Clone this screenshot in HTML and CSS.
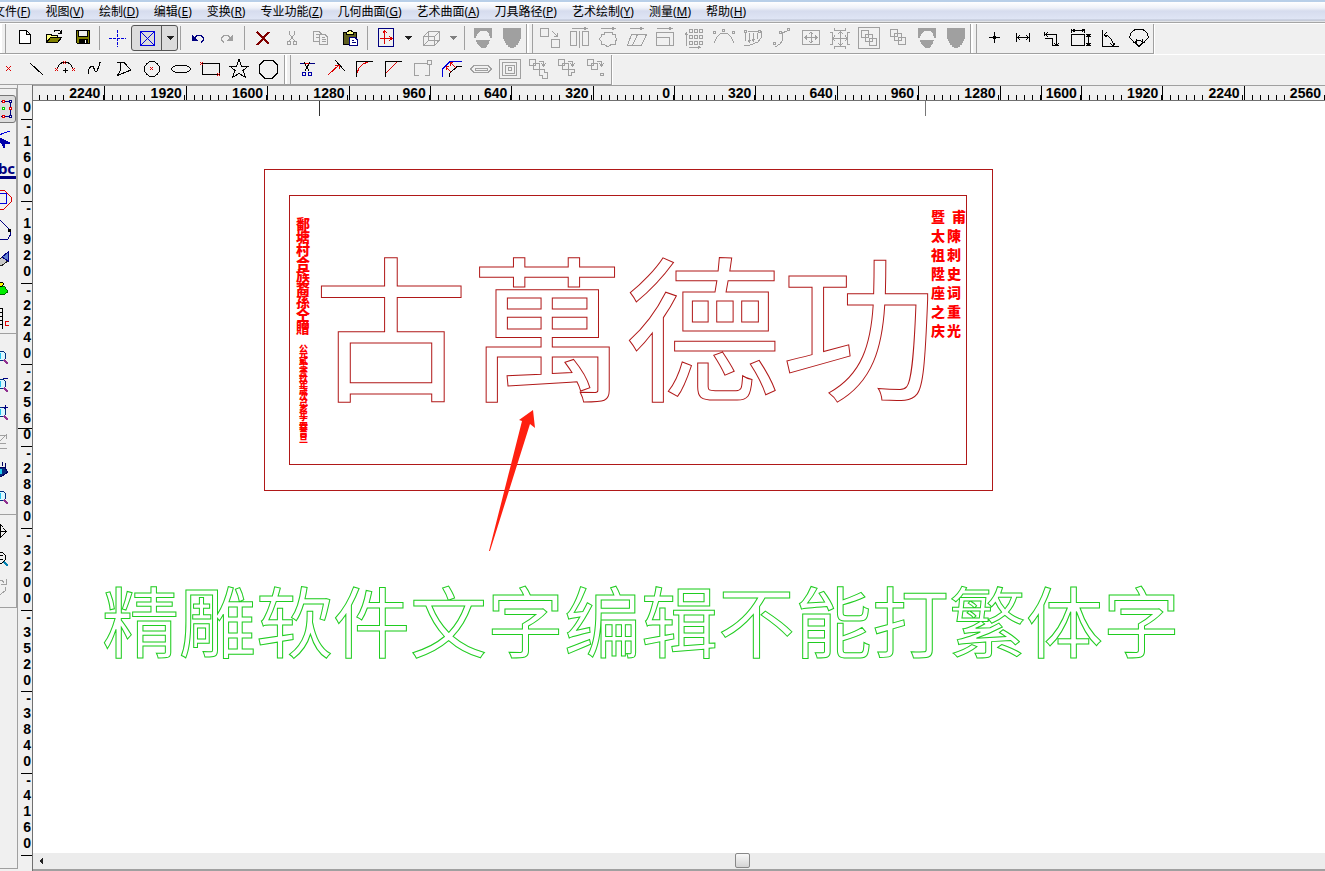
FILE: index.html
```html
<!DOCTYPE html>
<html lang="zh-CN">
<head>
<meta charset="utf-8">
<title>精雕</title>
<link rel="stylesheet" href="styles.css">
</head>
<body>
<div class="app">
<nav class="menubar">
<button>文件(<u>F</u>)</button><button>视图(<u>V</u>)</button><button>绘制(<u>D</u>)</button><button>编辑(<u>E</u>)</button><button>变换(<u>R</u>)</button><button>专业功能(<u>Z</u>)</button><button>几何曲面(<u>G</u>)</button><button>艺术曲面(<u>A</u>)</button><button>刀具路径(<u>P</u>)</button><button>艺术绘制(<u>Y</u>)</button><button>测量(<u>M</u>)</button><button>帮助(<u>H</u>)</button>
</nav>

<svg class="defs" aria-hidden="true">
<defs>
<g id="shield"><path fill="#a0a0a0" d="M-9-10H9V1H8V3H7V5H6V7H4V9H2V10H-2V9H-4V7H-6V5H-7V3H-8V1H-9Z"/></g>
<g id="shield-cut"><path fill="#a0a0a0" d="M-9-10H9V0H7L6-4L3-7H-3L-6-4L-7 0H-9ZM-7 2H7L6 5L4 8L2 10H-2L-4 8L-6 5Z"/></g>
<g id="squares"><path d="M-9.5-8.5h7v7h-7zM-5.5-4.5h7v7h-7zM-1.5-.5h7v7h-7z"/></g>
<g id="ungroup"><path d="M-9.5-9.5h6v6h-6zM-5.5-5.5h6v6h-6zM0-7.5H4.5V-3M2.5-5.5l2 3l2-3"/></g>
<g id="lens"><circle cx="1" cy="-2" r="5" fill="#d8f8ff" stroke="#003080"/><path d="M0-5v6" stroke="#20c0f0" stroke-width="2"/><path d="M4 2l4 4" stroke="#903090" stroke-width="2"/></g>
</defs>
</svg>

<div class="toolbar">
<div class="group first">
<button aria-label="新建"><svg viewBox="-12 -12 24 24"><path fill="#fff" d="M-5.5-7.5H1.5L5.5-3.5V5.5H-5.5ZM1.5-7.5V-3.5H5.5"/></svg></button>
<button aria-label="打开"><svg viewBox="-12 -12 24 24"><path fill="#ffff80" d="M-7.5 4.5V-3.5H-3L-2-2.5H3.5V0.500"/><path fill="#808000" d="M-7.500 4.500L-3.500-.5H7.500L3.500 4.500Z"/><path d="M0-6.500L2-8H5L7-5.500M7.500-8V-4.500H4"/></svg></button>
<button aria-label="保存"><svg viewBox="-12 -12 24 24"><path fill="#808000" d="M-6.5-7.5H6.5V5.5H-5.5L-6.5 4.500Z"/><path fill="#f0f0f0" d="M-4.500-7.500H4.500V-1.500H-4.500Z"/><path fill="#000" d="M-4 1H4.500V5H-4Z"/><path stroke="#fff" d="M2.500 2V5"/></svg></button>
<i class="sep tight"></i>
<button aria-label="定位"><svg viewBox="-12 -12 24 24" stroke="#00d"><path stroke-dasharray="3 1" d="M-8 .5H9"/><path stroke-dasharray="3 1" d="M.5-8V9"/></svg></button>
<span class="combo"><button aria-label="选择框"><svg viewBox="-12 -12 24 24" stroke="#00d"><path d="M-6.500-6.500H7.500V7.500H-6.500ZL7.500 7.500M7.500-6.500L-6.500 7.500"/></svg></button><button class="drop" aria-label="更多选择"><svg viewBox="-8 -12 16 24"><path fill="#222" stroke="none" d="M-4-2H4L0 2Z"/></svg></button></span>
<i class="sep tight"></i>
<button aria-label="撤销"><svg viewBox="-12 -12 24 24" stroke="#000080"><path d="M-4 .5L-1-2.500H3L5.500 0V2L3 4.500"/><path fill="#000080" d="M-5.500-2.500V2.500H-.5Z"/></svg></button>
<button aria-label="重做"><svg viewBox="-12 -12 24 24" stroke="#a0a0a0"><path d="M4 .5L1-2.500H-3L-5.500 0V2L-3 4.500"/><path fill="#a0a0a0" d="M5.500-2.500V2.500H.5Z"/></svg></button>
<i class="sep"></i>
<button aria-label="删除"><svg viewBox="-12 -12 24 24" stroke="#800000" stroke-width="2"><path d="M-6-6L6 6M6-6L-6 7"/></svg></button>
<button aria-label="剪切"><svg viewBox="-12 -12 24 24" stroke="#a0a0a0"><path d="M-2.500-7V-4L2.500 3M2.500-7V-4L-2.500 3"/><circle cx="-3" cy="5" r="2"/><circle cx="3" cy="5" r="2"/></svg></button>
<button aria-label="复制"><svg viewBox="-12 -12 24 24" stroke="#a0a0a0"><path fill="#f0f0f0" d="M-7.500-6.500H-2L.5-4V3.500H-7.500ZM-5-3.500H-2M-5-.5H-2"/><path fill="#f0f0f0" d="M-1.500-3.500H4L6.500-1V6.500H-1.500ZM1-.5H4M1 1.500H5M1 3.500H5"/></svg></button>
<button aria-label="粘贴"><svg viewBox="-12 -12 24 24"><path fill="#606020" d="M-6.500-5.500H6.500V6.500H-6.500Z"/><path fill="#ff8" d="M-3.500-3.500V-5.500L-1-7.500H1L3.500-5.500V-3.500Z"/><path fill="#fff" stroke="#000080" d="M-.5-.5H5L7.500 2V7.500H-.5ZM2 2.500H4M2 4.500H6"/></svg></button>
<i class="sep"></i>
<button aria-label="坐标系"><svg viewBox="-12 -12 24 24" stroke="#000080"><path d="M-7.500-9.500H7.500V8.500H-7.500Z"/><path stroke="#d00" d="M-1.500 6V-7M-6 .5H5M-3.500-4.500L-1.500-7.500L1.500-4.500M3-2L6 .5L3 3"/></svg></button>
<button class="drop" aria-label="坐标系选项"><svg viewBox="-8 -12 16 24"><path fill="#222" stroke="none" d="M-4-2H4L0 2Z"/></svg></button>
<button aria-label="视图"><svg viewBox="-12 -12 24 24" stroke="#a0a0a0"><path d="M-7.500-1.500H3.500V7.500H-7.500ZL-2.500-6.500H8.500L3.500-1.500M8.500-6.500V2L3.500 7.500M-2.500-6.500V2.500H8.500M-2.500 2.500L-7.500 7.500"/></svg></button>
<button class="drop" aria-label="视图选项"><svg viewBox="-8 -12 16 24"><path fill="#808080" stroke="none" d="M-4-2H4L0 2Z"/></svg></button>
<i class="sep"></i>
<button aria-label="曲面裁剪"><svg viewBox="-12 -12 24 24" stroke="none"><use href="#shield-cut"/></svg></button>
<button aria-label="曲面"><svg viewBox="-12 -12 24 24" stroke="none"><use href="#shield"/></svg></button>
</div>
<div class="group gray">
<button aria-label="平移"><svg viewBox="-12 -12 24 24"><path d="M-9.500-9.500h8v8h-8zM1.500 1.500h8v8h-8zM2-7L7-2M7.500-5V-1.500H4"/></svg></button>
<button aria-label="镜像"><svg viewBox="-12 -12 24 24"><path d="M-8.500-6.500h6v14h-6zM3.500-6.500h6v14h-6zM.5-7V10M-7-9.500H8M5-11l3 1.500L5-8"/></svg></button>
<button aria-label="旋转"><svg viewBox="-12 -12 24 24"><path d="M-4-6H4L4-4L7-4V-1L9 1L7 4V6H4L0 9L-4 6H-7V3L-9 1L-7-1V-4H-4ZM-7-9.500H7M4-11l3 1.500L4-8"/></svg></button>
<button aria-label="倾斜"><svg viewBox="-12 -12 24 24"><path d="M-9.500 7.500L-5.500-3.500H9.500L4.500 7.500ZM-4.500 7.500L.5-3.500M-7-9.500H6M3-11l3 1.500L3-8"/></svg></button>
<button aria-label="缩放"><svg viewBox="-12 -12 24 24"><path d="M-9.500-5.500H7.500V7.500H-9.500ZM-9.500-.5H3.500V7.500M-9-9.500H6M3-11l3 1.500L3-8"/></svg></button>
<button aria-label="阵列"><svg viewBox="-12 -12 24 24"><path d="M-5.500-8.500h3v3h-3zM-.5-8.500h3v3h-3zM4.500-8.500h3v3h-3zM-5.500-2.500h3v3h-3zM-.5-2.500h3v3h-3zM4.500-2.500h3v3h-3zM-5.500 3.500h3v3h-3zM-.5 3.500h3v3h-3zM4.500 3.500h3v3h-3zM-8.500 8V-5M-10-3l1.500-2l1.500 2M-6 9.500H5M3 8l2 1.500L3 11"/></svg></button>
<button aria-label="弯曲"><svg viewBox="-12 -12 24 24"><path d="M-10 5L-7-1L-4-4L0-5L4-4L7-1L10 5M-10.500-6.500h2v2h-2zM-1.500-8.500h2v2h-2zM8.500-6.500h2v2h-2z"/></svg></button>
<button aria-label="投影"><svg viewBox="-12 -12 24 24"><path d="M-8.500-7.500h2v2h-2zM5.500-7.500h2v2h-2zM-5-6.500H5M-7.500-5V3M-3.500-5V4M.5-5V3M4.500-5V1M-5 2l1.500 2L-2 2M-1 1l1.500 2L2 1M-9 8L-3 7L5 4L8 0V-7"/></svg></button>
<button aria-label="沿曲线"><svg viewBox="-12 -12 24 24"><path d="M5-7L0-5V3L-2 6L-7 9M5.500-9.500h2v2h-2zM-2.500-6.500h2v2h-2zM-8.500 4.500h2v2h-2z"/></svg></button>
<button aria-label="居中"><svg viewBox="-12 -12 24 24"><path d="M-8.500-7.500H8.500V6.500H-8.500ZM-6-.5H6M.5-6V5M-4-2.500L-6-.5L-4 1.500M4-2.500L6-.5L4 1.500M-2-4L0-6L2-4M-2 3L0 5L2 3"/></svg></button>
<button aria-label="对齐"><svg viewBox="-12 -12 24 24"><path d="M-7 .5H7M.5-7V8M-5-2.500L-7 .5L-5 3M5-2.500L7 .5L5 3M-2-4L.5-6.500L3-4M-2 5L.5 7.500L3 5M-5.500-10V-7.500H5.500V-10M-5.500 11V8.500H5.500V11M-10-5.500H-7.500V6.500H-10M10-5.500H7.500V6.500H10"/></svg></button>
<button aria-label="组合"><svg viewBox="-12 -12 24 24"><path d="M-10.500-10.500H10.500V10.500H-10.500Z"/><use href="#squares" x="2" y="1"/></svg></button>
<button aria-label="解组"><svg viewBox="-12 -12 24 24"><use href="#squares" x="2"/></svg></button>
<button aria-label="裁剪面"><svg viewBox="-12 -12 24 24" stroke="none"><use href="#shield-cut"/></svg></button>
<button aria-label="整面"><svg viewBox="-12 -12 24 24" stroke="none"><use href="#shield"/></svg></button>
</div>
<div class="group">
<button aria-label="测点"><svg viewBox="-12 -12 24 24"><path d="M-5-.5H6M.5-6V5"/><path fill="#000" stroke="none" d="M-1-2h3v3h-3z"/></svg></button>
<button aria-label="测距"><svg viewBox="-12 -12 24 24"><path d="M-6.500-5V4M6.500-5V4M-6-.5H6M-3-3L-5.500-.5L-3 2M3-3L5.500-.5L3 2"/></svg></button>
<button aria-label="测折线"><svg viewBox="-12 -12 24 24"><path d="M-7.500-6V-2M-7-3.500H4.500V7M-4-6L-6-3.500L-4-1M-7.500.5H.500V7.500H7M2 5L4.500 7.500L7 5"/></svg></button>
<button aria-label="测尺寸"><svg viewBox="-12 -12 24 24"><path d="M-9.500-3.500H3.500V7.500H-9.500ZM-9.500-9V-5M3.500-9V-5M-9-7.500H3M-6-9L-8-7.500L-6-6M1-9L3-7.500L1-6M5-3.500H10M5 7.500H10M7.500-3V7M5.500-1L7.500-3L9.500-1M5.500 5L7.500 7L9.500 5"/></svg></button>
<button aria-label="测角"><svg viewBox="-12 -12 24 24"><path d="M-7.500-8V8.500H9M-6-3H-3L1 1L3 5V8M-3-6L-6-3L-3-1M0 5L3 8L5 5"/></svg></button>
<button aria-label="测弧"><svg viewBox="-12 -12 24 24"><path d="M0 8.500L-9.500-.5L-8-5L-4-8.500H4L8-5L9.500-.5ZM-4 4L0 2L4 4M-3 1V4H-6M3 1V4H6"/></svg></button>
</div>
</div>

<div class="toolbar">
<div class="group second">
<button aria-label="点"><svg viewBox="-12 -12 24 24" stroke="#d00"><path d="M-1-3L4 2M4-3L-1 2"/></svg></button>
<button aria-label="直线"><svg viewBox="-12 -12 24 24"><path d="M-6-6L7 6"/></svg></button>
<button aria-label="圆弧"><svg viewBox="-12 -12 24 24"><path d="M-8 0L-6-4L-3-6.500H3L6-4L8 0M-2 1.500H3M.5-1V4"/><path stroke="#d00" d="M-10-1l3 3m0-3l-3 3M7-1l3 3m0-3l-3 3M-2-8l3 3m0-3l-3 3"/></svg></button>
<button aria-label="样条"><svg viewBox="-12 -12 24 24"><path d="M-6 5L-5 0L-3-3H-1L1 2H3L5-3V-6L7-7"/></svg></button>
<button aria-label="多段线"><svg viewBox="-12 -12 24 24"><path d="M-6-6.500H1L8 1L-5.500 6.500L-3 2V-6"/></svg></button>
<button aria-label="圆"><svg viewBox="-12 -12 24 24"><circle cx="0" cy="0" r="7.500"/><path stroke="#d00" d="M-2-2l3 3m0-3l-3 3"/></svg></button>
<button aria-label="椭圆"><svg viewBox="-12 -12 24 24"><ellipse cx="0" cy="0" rx="9.500" ry="4"/></svg></button>
<button aria-label="矩形"><svg viewBox="-12 -12 24 24"><path d="M-7.500-5.500H9.500V5.500H-7.500Z"/><path stroke="#d00" d="M-10-7l3 3m0-3l-3 3M7 4l3 3m0-3l-3 3"/></svg></button>
<button aria-label="星形"><svg viewBox="-12 -12 24 24"><path d="M0-9.500L2.500-3H9.500L4 1.500L6.500 8.500L0 4.500L-6.500 8.500L-4 1.500L-9.500-3H-2.500Z"/></svg></button>
<button aria-label="多边形"><svg viewBox="-12 -12 24 24"><path d="M-3.500-9H4.500L9.500-4V4L4.500 9H-3.500L-8.500 4V-4Z"/></svg></button>
</div>
<div class="group third">
<button aria-label="修剪"><svg viewBox="-12 -12 24 24"><path stroke="#000080" d="M-7-5.500H8"/><path stroke="#d00" d="M-3-5.500H3"/><path d="M-3-7L2 2M3-7L-2 2"/><g stroke="#00a"><circle cx="-3" cy="5" r="2"/><circle cx="3" cy="5" r="2"/></g></svg></button>
<button aria-label="延伸"><svg viewBox="-12 -12 24 24"><path d="M-1-9L9 2"/><path stroke="#d00" d="M-8 6L3-4M-1-4H3V0"/></svg></button>
<button aria-label="圆角"><svg viewBox="-12 -12 24 24"><path d="M-8.500 8V-7.500H8"/><path stroke="#d00" d="M-8 4L-6-1L-2-5L3-7"/></svg></button>
<button aria-label="倒角"><svg viewBox="-12 -12 24 24"><path d="M-8.500 8V-7.500H8"/><path stroke="#d00" d="M-8 4L3-7"/></svg></button>
<button aria-label="拐角"><svg viewBox="-12 -12 24 24" stroke="#a0a0a0"><path d="M5-5.500H-8.500V6.500H-4M2 6.500H6.500V-4M4.500-8.500h4v4h-4z"/></svg></button>
<button aria-label="偏移"><svg viewBox="-12 -12 24 24"><path stroke="#00d" d="M-9.500 8V0L-2-7.500H10"/><path d="M-3 8V5L5-2.500H10"/><path stroke="#d00" d="M-6-2L-1 3M-1-6L4-1M-6 1V-2.500H-3M-2-3V-6.500H1"/></svg></button>
<button aria-label="槽"><svg viewBox="-12 -12 24 24" stroke="#a0a0a0"><path d="M-10.500 0L-7-3.500H7L10.500 0L7 3.500H-7ZM-6-.5H6V1H-6Z"/></svg></button>
<button aria-label="环"><svg viewBox="-12 -12 24 24" stroke="#a0a0a0"><path d="M-10.500-9.500H10.500V9.500H-10.500ZM-7.500-6.500H6.500V6.500H-7.500ZM-4.500-3.500H4.500V4.500H-4.500ZM-1.500-1.500h3v3h-3z"/></svg></button>
<button aria-label="并集"><svg viewBox="-12 -12 24 24" stroke="#a0a0a0"><use href="#ungroup"/><path d="M.5.5H5.500V3.500H8.500V9.500H3.500V6.500H.5Z"/></svg></button>
<button aria-label="差集"><svg viewBox="-12 -12 24 24" stroke="#a0a0a0"><use href="#ungroup"/><path d="M.5.5H6.500V3.500H3.500V6.500H.5Z"/></svg></button>
<button aria-label="交集"><svg viewBox="-12 -12 24 24" stroke="#a0a0a0"><use href="#ungroup"/><path d="M3.500 4.500h3v2h-3z"/></svg></button>
</div>
</div>

<div class="work">
<aside class="side">
<div class="palette">
<button class="on" aria-label="选择"><svg viewBox="-12 -12 24 24"><path stroke="#000080" d="M0-7.500H9.500V7.500H0"/><path stroke="#d00" fill="#fff" d="M1.500-8.500h2v2h-2zM1.500 6.500h2v2h-2zM8.500-1.500h2v2h-2z"/><path stroke="#0c0" fill="#fff" d="M1.500-1.500h2v2h-2z"/><path stroke="#000080" fill="#fff" d="M8.500-8.500h2v2h-2zM8.500 6.500h2v2h-2z"/></svg></button>
<button aria-label="节点"><svg viewBox="-12 -12 24 24"><path stroke="#00d" d="M-4-3L10-8"/><path fill="#00a" stroke="#00a" d="M-2-2L10 4L5 4L4 9Z"/></svg></button>
<button aria-label="文字"><b class="abc">abc</b></button>
<button aria-label="图形"><svg viewBox="-12 -12 24 24"><path stroke="#d00" d="M-4-9H4L11-2V3L4 10H-4"/><path stroke="#00d" d="M-8-5.500H6.500V4.500H-8"/></svg></button>
<button aria-label="曲线"><svg viewBox="-12 -12 24 24"><path stroke="#000080" d="M0-9L10 1L11 5L8 10L2 11L-3 9"/><path fill="#000" d="M8 0h2v2h-2z"/></svg></button>
<button aria-label="刷子"><svg viewBox="-12 -12 24 24"><path stroke="#222" fill="#c8c8c8" d="M-4 5L2-2L8 2L1 7Z"/><path fill="#6080d0" stroke="#000080" d="M2-2L8-7V2Z"/></svg></button>
<button aria-label="填充"><svg viewBox="-12 -12 24 24"><path fill="#0e0" stroke="#060" d="M-4 5V-3L5-2L8 3L3 6Z"/><path fill="#ff0" d="M-4-7H2L4-5L2-3H-4Z"/></svg></button>
<button aria-label="标尺"><svg viewBox="-12 -12 24 24"><path d="M-2-10.500H2.500V10M-2-6.500H2M-2-2.500H2M-2 1.500H2M-2 5.500H2"/><path stroke="#d00" d="M9 2.500H6L5.500 3V6L6 6.500H9"/></svg></button>
</div>
<div class="palette zoom">
<button aria-label="窗口缩放"><svg viewBox="-12 -12 24 24"><use href="#lens"/></svg></button>
<button aria-label="缩小"><svg viewBox="-12 -12 24 24"><use href="#lens"/><path stroke="#000080" d="M3-7.500H8"/></svg></button>
<button aria-label="放大"><svg viewBox="-12 -12 24 24"><use href="#lens"/><path stroke="#000080" d="M2-6.500H8M5.500-9V-4"/></svg></button>
<button aria-label="上一视图"><svg viewBox="-12 -12 24 24" stroke="#a0a0a0"><path d="M-3-7H6L-2 1H6M-3 6.500H7M2-3L6-7V-3"/></svg></button>
<button aria-label="观察"><svg viewBox="-12 -12 24 24"><path fill="#0a2a80" stroke="#000060" d="M-8 0L-2-3H4L8 2L2 6H-4ZM-2-4V-8M2-4V-8M5-2V-7"/><path stroke="#20d0f0" stroke-width="2" d="M1-1V4"/></svg></button>
<button aria-label="全部"><svg viewBox="-12 -12 24 24"><use href="#lens"/></svg></button>
<i class="rule"></i>
<button aria-label="移动视图"><svg viewBox="-12 -12 24 24"><path d="M-6 .5H6M.5-6V7M3-3L6.500.5L3 4M-2-4L.5-6.500L3-4M-2 4L.5 6.500L3 4"/></svg></button>
<button aria-label="实际大小"><svg viewBox="-12 -12 24 24"><path d="M-2-7H2L5-4V1L2 4H-2M-1-3.500H3M-1 .5H3"/><path stroke="#0080b0" stroke-width="2" d="M4 3L8 7"/></svg></button>
<button aria-label="旋转视图"><svg viewBox="-12 -12 24 24" stroke="#a0a0a0"><path d="M-2-7H2L4-4M6-8V-3H1M6 0L5 4L1 7H-3"/></svg></button>
</div>
</aside>
<div class="vruler"><span class="zero">0</span><div class="vsegs"><span><i>-</i>1600</span><span><i>-</i>1920</span><span><i>-</i>2240</span><span><i>-</i>2560</span><span><i>-</i>2880</span><span><i>-</i>3200</span><span><i>-</i>3520</span><span><i>-</i>3840</span><span><i>-</i>4160</span></div><i class="vmark"></i></div>
<div class="stage">
<div class="hruler"><div class="hsegs"><span><b>2240</b></span><span><b>1920</b></span><span><b>1600</b></span><span><b>1280</b></span><span><b>960</b></span><span><b>640</b></span><span><b>320</b></span><span><b>0</b></span><span><b>320</b></span><span><b>640</b></span><span><b>960</b></span><span><b>1280</b></span><span><b>1600</b></span><span><b>1920</b></span><span><b>2240</b></span><span><b>2560</b></span></div><i class="hmark"></i></div>
<main class="canvas">
<svg class="drawing">
<path stroke="#333" d="M286.500 0V15"/><path stroke="#777" d="M892.500 0V15"/>
<rect class="frame" x="231.500" y="68.500" width="728" height="321"/>
<rect class="frame" x="256.500" y="94.500" width="677" height="269"/>
<text class="plaque" x="280" y="288">古萬德功</text>
<text class="note" x="69" y="551">精雕软件文字编辑不能打繁体字</text>
<path class="pointer" d="M500 309L502 327L497 323L457 450L456 450L489 320L486 319Z"/>
</svg>
<div class="column donors">鄱塘村合族裔孫仝贈</div>
<div class="column date">公元贰零壹玖年歲次己亥年孟春吉旦</div>
<div class="column right-a">暨太祖陞座之庆</div>
<div class="column right-b"><span>甫</span>陳刺史词重光</div>
</main>
<div class="scroll"><button aria-label="向左滚动"><svg viewBox="0 0 16 14"><path fill="#222" stroke="none" d="M6 7L10 3V11Z"/></svg></button><input type="range" aria-label="水平滚动" min="0" max="1000" value="544"></div>
</div>
</div>
</div>
</body>
</html>
```
FILE: styles.css
```css
* { box-sizing: border-box; }
body { margin: 0; background: #f0f0f0; font-family: "Noto Sans", "Noto Sans CJK SC", sans-serif; font-size: 12px; color: #000; }
button { font: inherit; color: inherit; background: none; border: 0; padding: 0; flex: none; }
svg { display: block; fill: none; shape-rendering: crispEdges; }
svg:not([stroke]):not(.defs) { stroke: #000; }
.defs { width: 0; height: 0; position: absolute; }
.app { display: flex; flex-direction: column; height: 100vh; overflow: hidden; }
.menubar { flex: none; display: flex; gap: 15px; height: 23px; padding-left: 2px; margin-left: -9px; border-top: 2px solid #b8cfe8; border-bottom: 1px solid #a5a5a5; background: linear-gradient(#fff, #eef1f8 30%, #d6dcee 45%, #dfe5f5 85%, #b8bfd0 90%, #f0f0f0); }
.menubar button { white-space: nowrap; line-height: 18px; }

.toolbar { flex: none; display: flex; height: 31px; border-top: 1px solid #fff; }
.toolbar .group { display: flex; align-items: center; height: 30px; padding: 0 0 2px 8px; border-right: 1px solid #a0a0a0; border-bottom: 1px solid #a0a0a0; box-shadow: inset 2px 0 #fff, inset 5px 0 #f0f0f0, inset 6px 0 #a0a0a0, 1px 1px #fff; }
.toolbar .group.first { padding-left: 10px; }
.toolbar .group.second { margin-left: -8px; padding-left: 0; padding-right: 2px; box-shadow: none; }
.toolbar .group.third { padding-left: 7px; }
.toolbar button { width: 29px; }
.toolbar svg { width: 24px; height: 24px; margin: 0 auto; }
.toolbar .gray svg:not([stroke]) { stroke: #a0a0a0; }
.sep { width: 1px; height: 24px; margin: 0 3px; background: #a0a0a0; }
.sep.tight { margin: 0 2px; }
.combo { display: flex; height: 26px; border: 1px solid #555; border-radius: 3px; background: #dcdcdc; }
.toolbar .drop { width: 16px; }
.toolbar .drop svg { width: 16px; }
.combo .drop { border-left: 1px solid #555; }

.work { flex: 1; min-height: 0; display: flex; }
.side { width: 18px; overflow: hidden; border-right: 1px solid #a0a0a0; padding-top: 3px; margin-bottom: 2px; border-bottom: 1px solid #a0a0a0; }
.palette { display: flex; flex-direction: column; gap: 2px; padding-top: 6px; border-top: 1px solid #a0a0a0; border-right: 1px solid #a0a0a0; }
.palette button { width: 28px; height: 28px; margin-left: -12px; }
.palette .on { border: 1px solid #777; border-radius: 3px; background: #dcdcdc; }
.palette svg { width: 24px; height: 24px; }
.palette.zoom { gap: 0; padding: 10px 0 6px; border-bottom: 1px solid #a0a0a0; }
.rule { height: 1px; margin: 2px 0; background: #a0a0a0; }
.abc { display: block; font-size: 15px; line-height: 16px; color: #000080; border-bottom: 3px solid #000080; }

.vruler { position: relative; width: 15px; flex: none; display: flex; flex-direction: column; padding-top: 14px; padding-bottom: 15px; font: bold 14px/16px "Liberation Sans", sans-serif; text-align: right; border-right: 1px solid #707070; }
.zero { height: 21px; border-bottom: 1px solid #000; margin-left: 3px; padding-right: 1px; }
.vsegs { flex: 1; display: flex; flex-direction: column; }
.vsegs span { flex: 1; width: 11px; margin-left: 3px; padding-left: 2px; padding-right: 1px; word-break: break-all; border-bottom: 1px solid #000; }
.vsegs i { display: block; font-style: normal; line-height: 13px; }
.vmark { position: absolute; left: 0; right: 0; top: 343px; height: 1px; background: #000; }

.stage { flex: 1; min-width: 0; display: flex; flex-direction: column; }
.hruler { position: relative; flex: none; height: 16px; overflow: hidden; border-top: 1px solid #a0a0a0; border-bottom: 1px solid #707070; }
.hsegs { display: flex; height: 14px; margin-left: -9px; margin-right: -1px; }
.hsegs span { flex: 1; display: flex; justify-content: flex-end; padding-right: 4px; border-right: 1px solid #000; background: repeating-linear-gradient(90deg, transparent 0, transparent 7px, #000 7px, #000 8px) 0 100% / 100% 5px no-repeat; font: bold 14px/14px "Liberation Sans", sans-serif; }
.hsegs b { background: #f0f0f0; padding-left: 3px; }
.hmark { position: absolute; left: 78%; top: 0; bottom: 0; width: 1px; background: #000; }
.canvas { position: relative; flex: 1; min-height: 0; background: #fff; overflow: hidden; }
.drawing { width: 100%; height: 100%; }
.frame { stroke: #b01818; }
.drawing text { fill: none; stroke-width: 1px; shape-rendering: auto; font-family: "Noto Sans CJK SC", sans-serif; font-weight: 400; }
.plaque { font-size: 156px; stroke: #b01818; }
.note { font-size: 77px; stroke: #20cc20; }
.pointer { fill: #ff2010; stroke: none; shape-rendering: auto; }
.column { position: absolute; color: #f00; width: 14px; font-family: "Noto Sans CJK SC", sans-serif; font-weight: 900; font-size: 14px; line-height: 19px; word-break: break-all; }
.donors { left: 263px; top: 116px; line-height: 13px; }
.date { left: 266px; top: 245px; width: 9px; font-size: 9px; line-height: 6px; }
.right-a { left: 898px; top: 106px; }
.right-b { left: 914px; top: 106px; }
.right-b span { margin-left: 5px; }

.scroll { flex: none; display: flex; height: 18px; border-bottom: 2px solid #a0a0a0; background: #ececec; }
.scroll button svg { width: 16px; height: 14px; }
.scroll input { flex: 1; min-width: 0; margin: 0; height: 15px; appearance: none; background: transparent; }
.scroll input::-webkit-slider-thumb { appearance: none; width: 15px; height: 15px; border: 1px solid #888; border-radius: 2px; background: linear-gradient(#f8f8f8, #d4d4d4); }
```
